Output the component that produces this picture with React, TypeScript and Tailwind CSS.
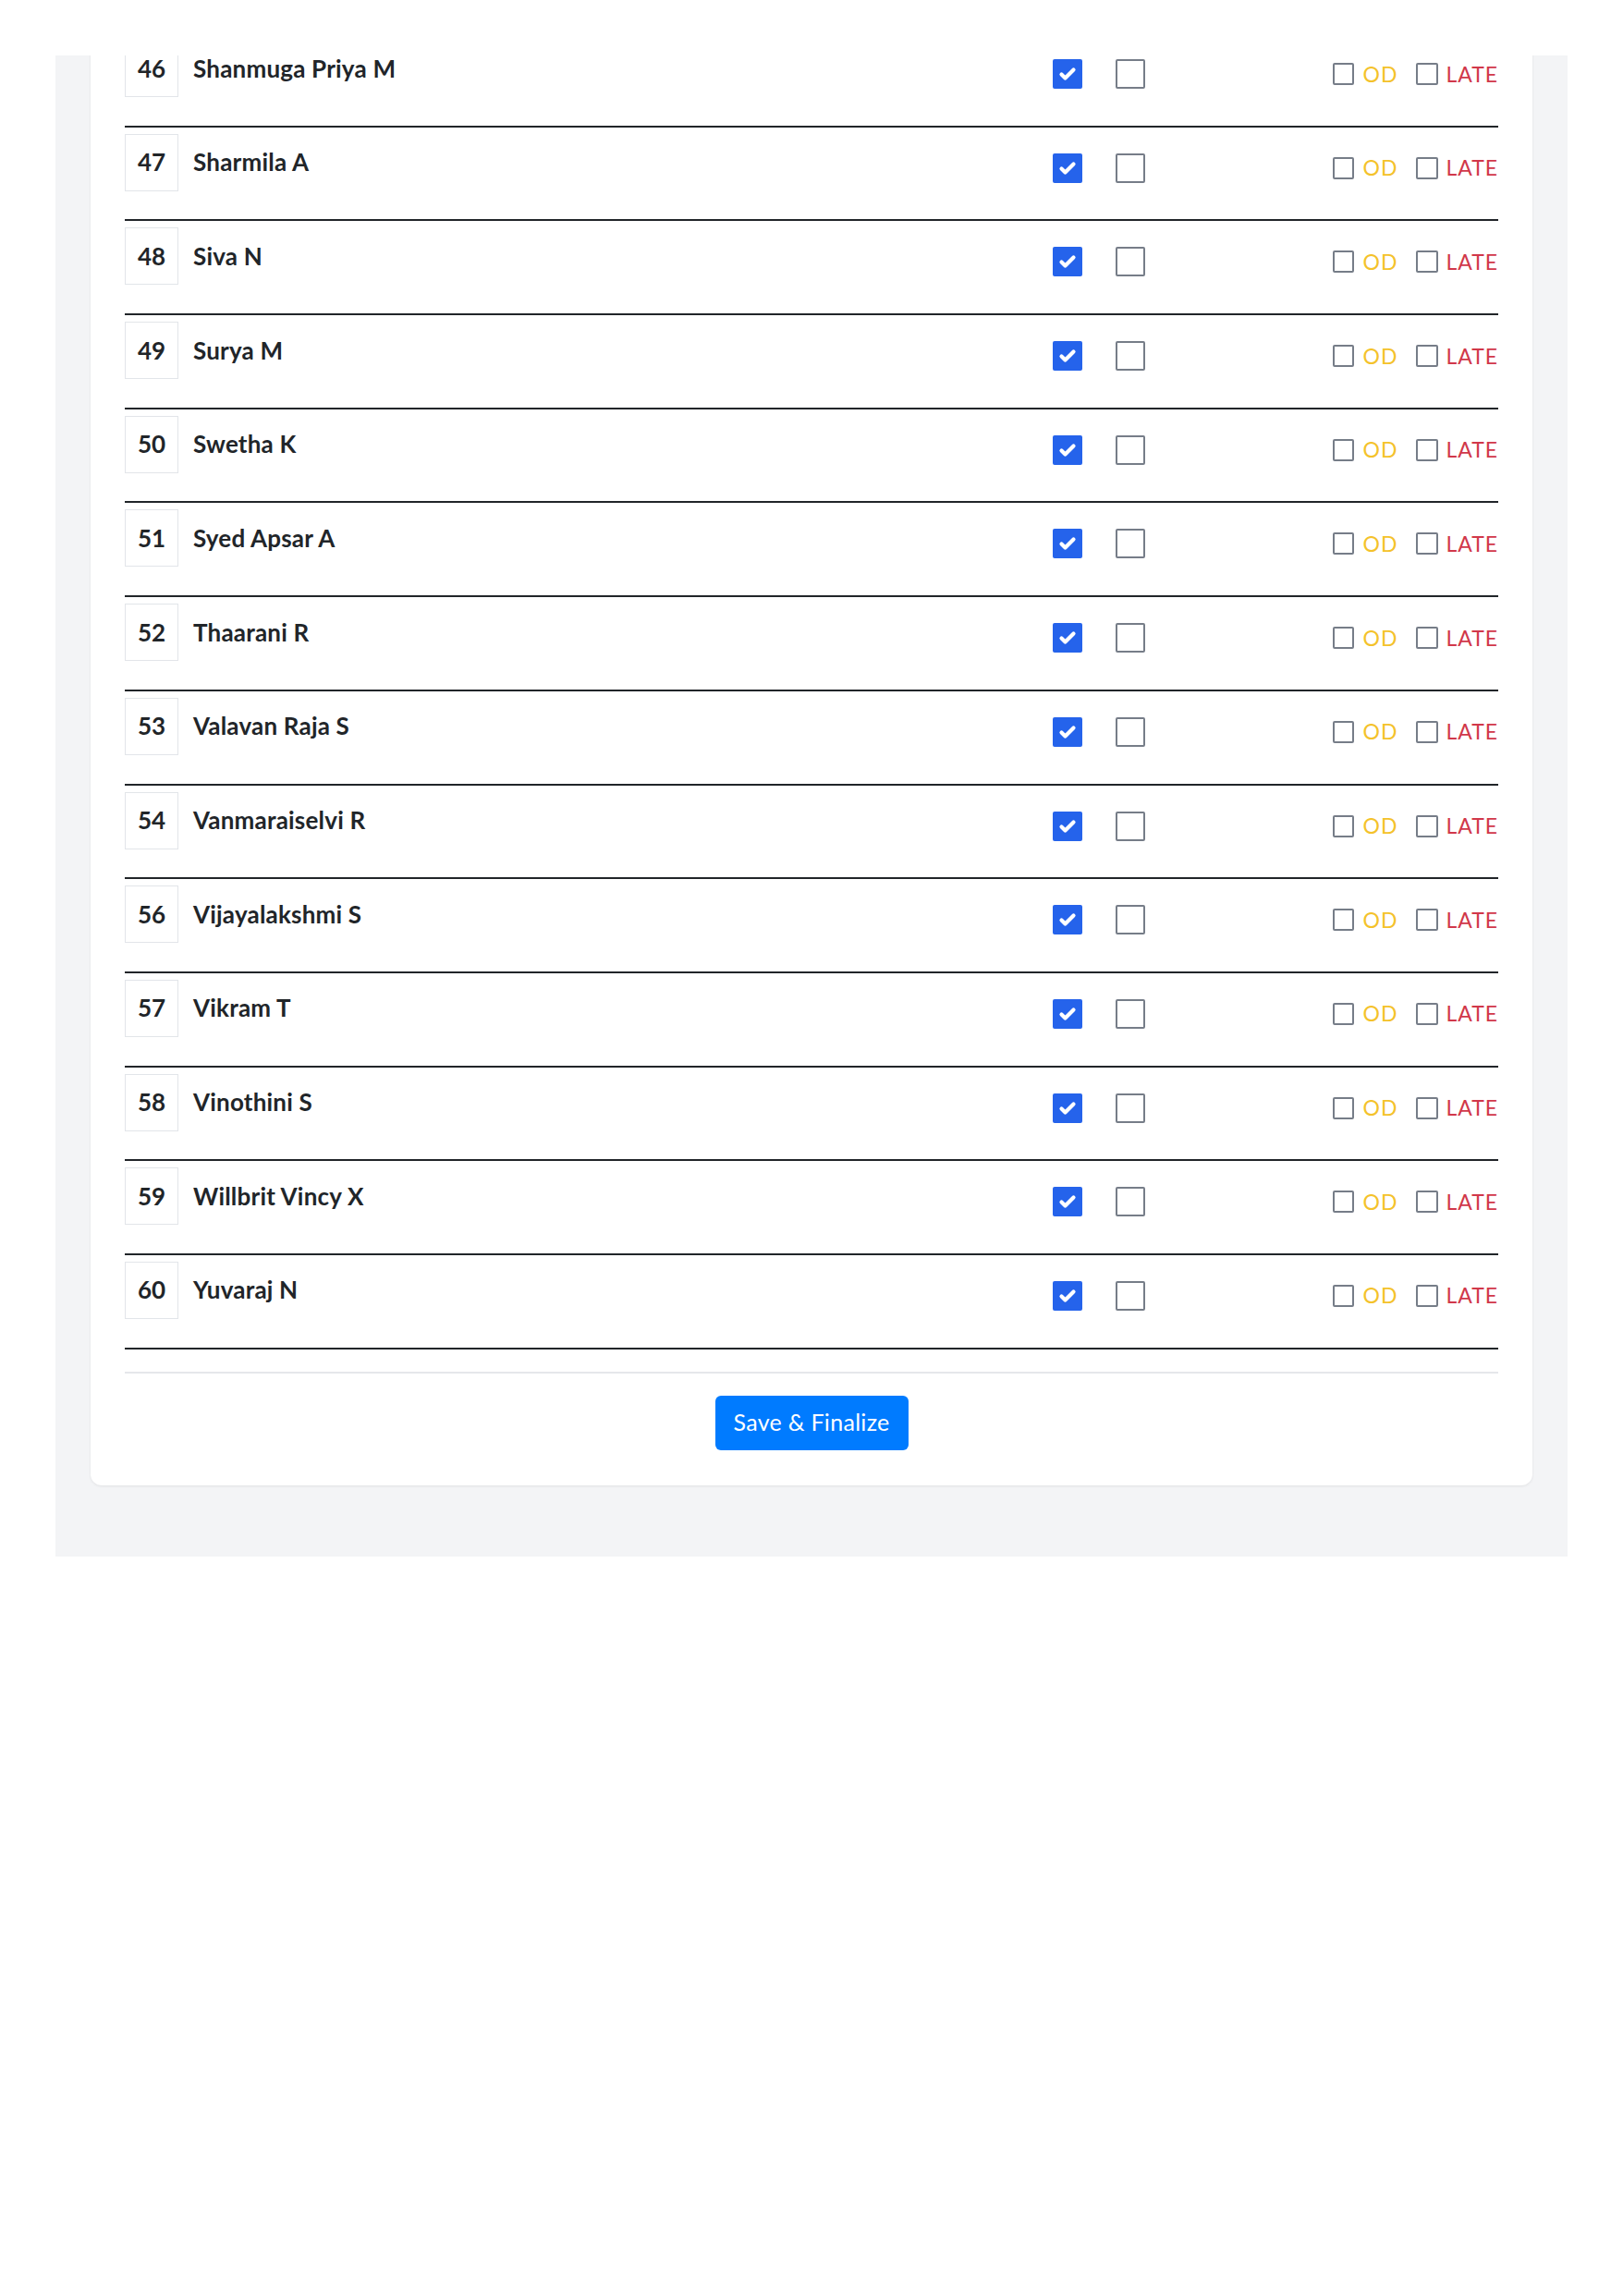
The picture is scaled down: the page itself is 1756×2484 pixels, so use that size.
import React from 'react';

const students: [number, string][] = [
  [46, 'Shanmuga Priya M'],
  [47, 'Sharmila A'],
  [48, 'Siva N'],
  [49, 'Surya M'],
  [50, 'Swetha K'],
  [51, 'Syed Apsar A'],
  [52, 'Thaarani R'],
  [53, 'Valavan Raja S'],
  [54, 'Vanmaraiselvi R'],
  [56, 'Vijayalakshmi S'],
  [57, 'Vikram T'],
  [58, 'Vinothini S'],
  [59, 'Willbrit Vincy X'],
  [60, 'Yuvaraj N'],
];

const CheckedBox = () => (
  <div className="w-[32px] h-[32px] bg-[#2563eb] rounded-[2px] flex items-center justify-center">
    <svg width="32" height="32" viewBox="0 0 32 32">
      <path d="M9.5 16.5 L13.5 20.5 L22.5 11.5" fill="none" stroke="white" strokeWidth="4.2" strokeLinecap="round" strokeLinejoin="round" />
    </svg>
  </div>
);

const EmptyBox = ({ size }: { size: 'lg' | 'sm' }) => (
  <div
    className={
      size === 'lg'
        ? 'w-[32px] h-[32px] border-2 border-[#767d88] rounded-[2px] bg-white'
        : 'w-[24px] h-[24px] border-2 border-[#767d88] rounded-[2px] bg-white'
    }
  />
);

const Row = ({ no, name }: { no: number; name: string }) => (
  <div className="h-[101.7px] border-b-2 border-[#212529] flex items-start pt-[7px]">
    <div className="flex-1 flex items-center gap-[16px]">
      <div className="w-[58px] h-[62px] border border-[#e2e5e9] flex items-center justify-center text-[26px] font-bold text-[#212529]">
        {no}
      </div>
      <div className="text-[26px] font-bold text-[#212529] tracking-[0.2px]">{name}</div>
    </div>
    <div className="flex gap-[36px] mt-[21px] mr-[203px]">
      <CheckedBox />
      <EmptyBox size="lg" />
    </div>
    <div className="w-[179px] flex items-center justify-end mt-[25px]">
      <EmptyBox size="sm" />
      <span className="ml-[9px] text-[23px] leading-none tracking-[1px] text-[#f4c22b]">OD</span>
      <div className="ml-[20px]">
        <EmptyBox size="sm" />
      </div>
      <span className="ml-[8px] text-[23px] leading-none tracking-[1px] text-[#d1384a]">LATE</span>
    </div>
  </div>
);

export default function App() {
  return (
    <div className="min-h-screen bg-white pt-[60px]" style={{ fontFamily: 'Lato, "Open Sans", sans-serif' }}>
      <div className="mx-[60px] bg-[#f3f4f6] overflow-hidden px-[38px] pb-[77px]">
        <div className="-mt-[24px] bg-white rounded-b-[12px] shadow-[0_1px_3px_rgba(0,0,0,0.08)] px-[37px] pb-[38px]">
          {students.map(([no, name]) => (
            <Row key={no} no={no} name={name} />
          ))}
          <div className="mt-[24px] border-t-2 border-[#e5e7eb] pt-[24px] flex justify-center">
            <button className="w-[209px] h-[59px] bg-[#007bff] text-white text-[25px] tracking-[0.3px] rounded-[6px]">
              Save &amp; Finalize
            </button>
          </div>
        </div>
      </div>
    </div>
  );
}
